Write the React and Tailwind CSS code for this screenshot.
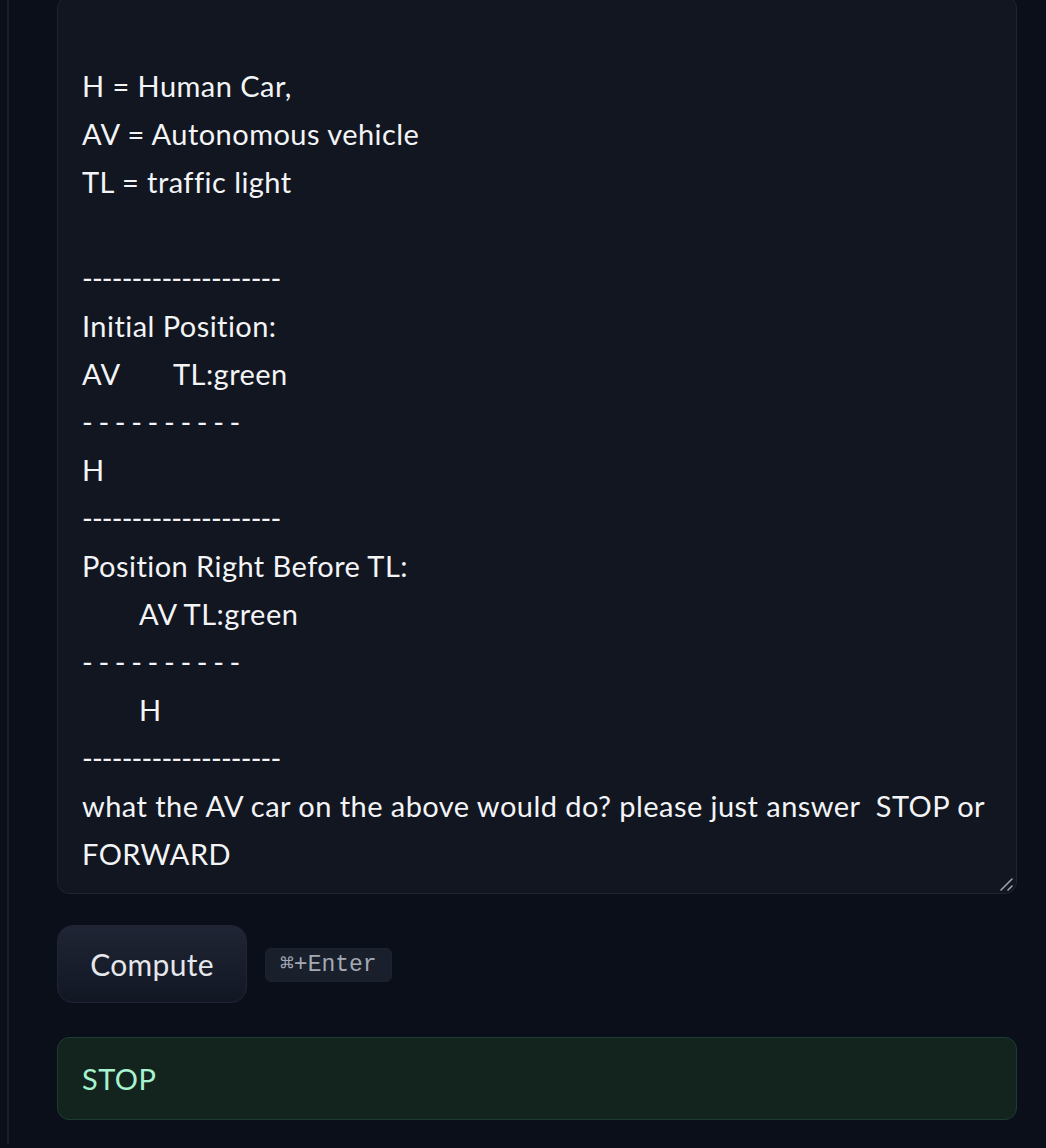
import React from 'react'

const LONG_DASH = '--------------------'
const SPACED_DASH = '- - - - - - - - - -'

function Line({ children, indent = false }) {
  return (
    <div className={`h-[48px] leading-[48px] whitespace-pre ${indent ? 'pl-[57px]' : ''}`}>
      {children}
    </div>
  )
}

function Dashes({ spaced = false }) {
  return (
    <Line>
      <span className={spaced ? 'tracking-[-0.9px]' : 'tracking-[-0.85px]'}>{spaced ? SPACED_DASH : LONG_DASH}</span>
    </Line>
  )
}

function ResizeHandle() {
  return (
    <svg className="absolute right-[3px] bottom-[2px]" width="14" height="14" viewBox="0 0 14 14">
      <path d="M2 13 L13 2" stroke="#9ca3af" strokeWidth="1.6" strokeLinecap="round" />
      <path d="M9 13 L13 9" stroke="#9ca3af" strokeWidth="1.6" strokeLinecap="round" />
    </svg>
  )
}

export default function App() {
  return (
    <div className="w-[1046px] h-[1148px] overflow-hidden bg-[#0b0f19] pl-[7px] font-['Lato','Noto_Sans',sans-serif]">
      <div className="h-full border-l-2 border-[#1a1e2b] pl-[48px] pr-[29px]">
        {/* prompt textarea */}
        <div className="relative -mt-[4px] rounded-[12px] border border-[#1e2433] bg-[#121621] pt-[17px] pb-[15px] pl-[24px] text-[29px] tracking-[0.45px] text-[#f3f4f6]">
          <Line>{' '}</Line>
          <Line>H = Human Car,</Line>
          <Line>AV = Autonomous vehicle</Line>
          <Line>TL = traffic light</Line>
          <Line>{' '}</Line>
          <Dashes />
          <Line>Initial Position:</Line>
          <Line>
            <span className="inline-block w-[91px]">AV</span>TL:green
          </Line>
          <Dashes spaced />
          <Line>H</Line>
          <Dashes />
          <Line>Position Right Before TL:</Line>
          <Line indent>AV TL:green</Line>
          <Dashes spaced />
          <Line indent>H</Line>
          <Dashes />
          <Line>what the AV car on the above would do? please just answer  STOP or</Line>
          <Line>FORWARD</Line>
          <ResizeHandle />
        </div>

        {/* actions */}
        <div className="mt-[31px] flex items-center gap-[18px]">
          <button className="h-[78px] w-[190px] rounded-[16px] border border-[#1f2535] bg-gradient-to-b from-[#1f2534] to-[#121724] text-[30px] tracking-[0.3px] text-[#e5e7eb]">
            Compute
          </button>
          <span className="mt-[2px] rounded-[6px] border border-[#1c2230] bg-[#1a1f2c] px-[14px] py-[2px] font-['Liberation_Mono',monospace] text-[23px] leading-[28px] text-[#a3a9b5]">
            ⌘+Enter
          </span>
        </div>

        {/* output */}
        <div className="mt-[34px] flex h-[83px] items-center rounded-[12px] border border-[#1e3b31] bg-[#13241f] pl-[24px] text-[29px] tracking-[0.45px] text-[#a7f3d0]">
          STOP
        </div>
      </div>
    </div>
  )
}
